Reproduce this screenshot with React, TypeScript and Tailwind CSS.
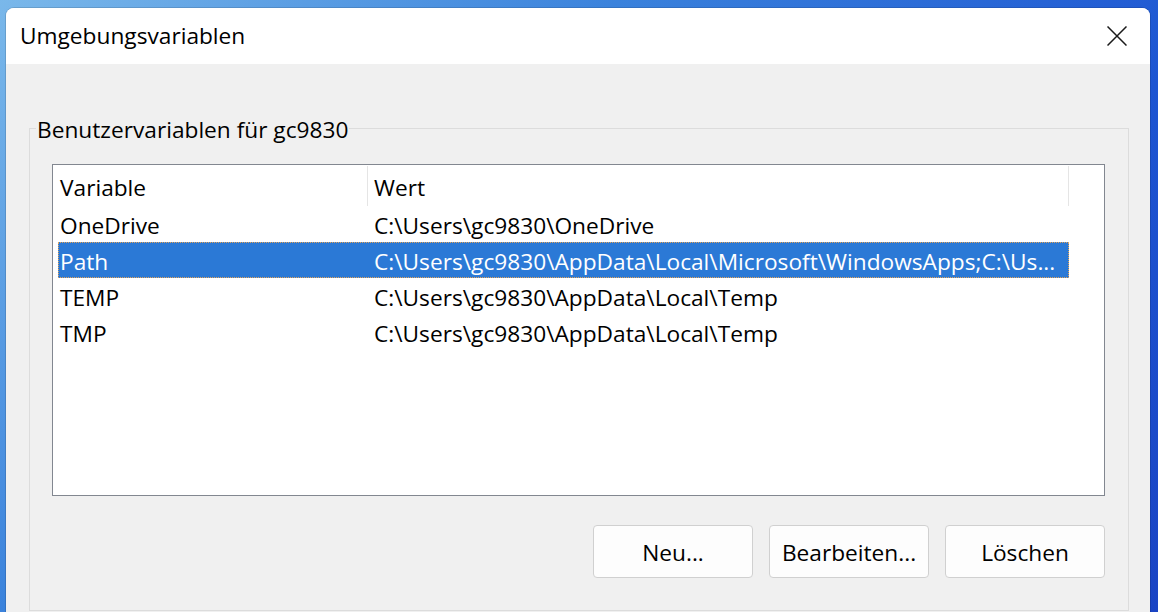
const rows = [
  { name: 'OneDrive', value: 'C:\\Users\\gc9830\\OneDrive' },
  {
    name: 'Path',
    value: 'C:\\Users\\gc9830\\AppData\\Local\\Microsoft\\WindowsApps;C:\\Us...',
    selected: true,
  },
  { name: 'TEMP', value: 'C:\\Users\\gc9830\\AppData\\Local\\Temp' },
  { name: 'TMP', value: 'C:\\Users\\gc9830\\AppData\\Local\\Temp' },
];

const buttons = ['Neu...', 'Bearbeiten...', 'Löschen'];

const CloseIcon = () => (
  <svg width="20" height="20" viewBox="0 0 20 20" fill="none" stroke="#1a1a1a" strokeWidth="1.5">
    <path d="M0.5 0.5 L19.5 19.5 M19.5 0.5 L0.5 19.5" />
  </svg>
);

export default function App() {
  return (
    <div className="w-[1158px] h-[612px] overflow-hidden pt-[8px] pl-[6px] pr-[8px] bg-[linear-gradient(135deg,#7ab8ea_0%,#3a82dc_35%,#1d55d2_70%,#1a44c4_100%)] font-['Open_Sans',sans-serif] text-[22.7px] text-black">
      <div className="h-full flex flex-col rounded-t-[8px] overflow-hidden bg-[#f0f0f0] shadow-[0_0_0_1px_rgba(0,0,0,0.12)]">
        {/* Title bar */}
        <div className="h-[56px] shrink-0 bg-white flex items-center justify-between pl-[14px] pr-[23px]">
          <span className="leading-none">Umgebungsvariablen</span>
          <CloseIcon />
        </div>

        {/* Body */}
        <div className="flex-1 pt-[52px] pl-[23px] pr-[21px]">
          <fieldset className="border border-[#dcdcdc] p-0">
            <legend className="ml-[6px] px-[1px] pt-[4px] leading-[20px]">Benutzervariablen für gc9830</legend>

            <div className="pt-[24px] pl-[22px] pr-[23px] pb-[32px]">
              {/* List view */}
              <div className="h-[332px] border border-[#828790] bg-white">
                <div className="h-[41px] flex">
                  <div className="w-[315px] h-[40px] mt-[1px] border-r border-[#e5e5e5] pl-[7px] pt-[4px] flex items-center">
                    Variable
                  </div>
                  <div className="w-[701px] h-[40px] mt-[1px] border-r border-[#e5e5e5] pl-[6px] pt-[4px] flex items-center">
                    Wert
                  </div>
                </div>
                <div className="px-[5px]">
                  {rows.map((row) => (
                    <div
                      key={row.name}
                      className={
                        row.selected
                          ? 'w-[1011px] h-[36px] pt-[4px] flex items-center whitespace-nowrap bg-[#2b79d6] text-white outline-1 outline-dotted outline-[#e3a45a] -outline-offset-1'
                          : 'w-[1011px] h-[36px] pt-[4px] flex items-center whitespace-nowrap'
                      }
                    >
                      <div className="w-[316px] pl-[2px]">{row.name}</div>
                      <div className="flex-1 overflow-hidden">{row.value}</div>
                    </div>
                  ))}
                </div>
              </div>

              {/* Buttons */}
              <div className="mt-[29px] flex justify-end gap-[16px]">
                {buttons.map((label) => (
                  <button
                    key={label}
                    className="w-[160px] h-[53px] pt-[4px] rounded-[4px] border border-[#d0d0d0] bg-[#fdfdfd] flex items-center justify-center"
                  >
                    {label}
                  </button>
                ))}
              </div>
            </div>
          </fieldset>
        </div>
      </div>
    </div>
  );
}
